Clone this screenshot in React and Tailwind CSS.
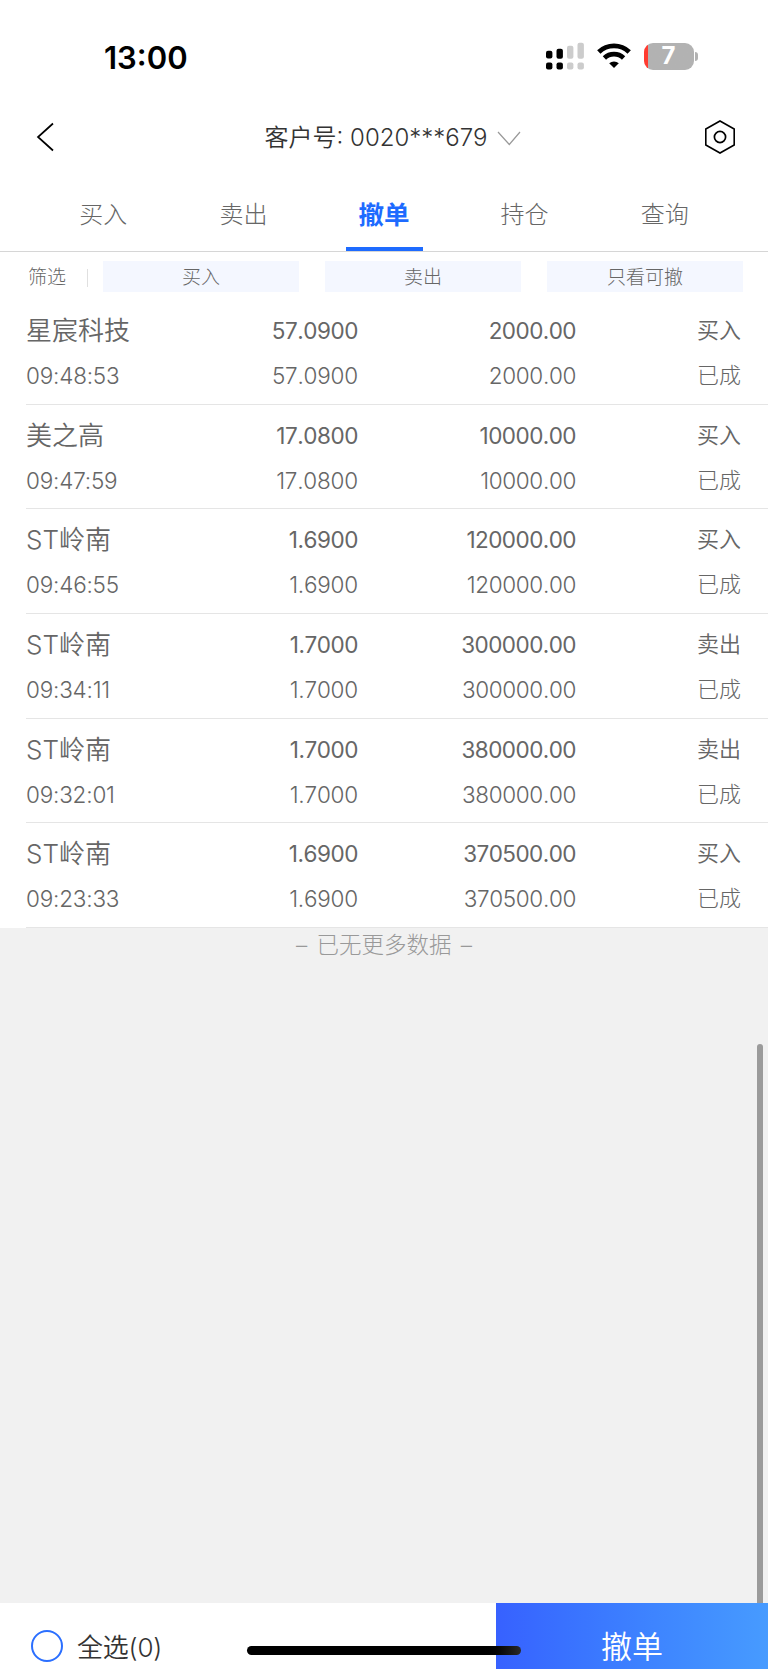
import React from 'react';

const tabs = ['买入', '卖出', '撤单', '持仓', '查询'];

const filters = ['买入', '卖出', '只看可撤'];

const orders = [
  { name: '星宸科技', time: '09:48:53', price: '57.0900', amount: '2000.00', side: '买入', status: '已成' },
  { name: '美之高', time: '09:47:59', price: '17.0800', amount: '10000.00', side: '买入', status: '已成' },
  { name: 'ST岭南', time: '09:46:55', price: '1.6900', amount: '120000.00', side: '买入', status: '已成' },
  { name: 'ST岭南', time: '09:34:11', price: '1.7000', amount: '300000.00', side: '卖出', status: '已成' },
  { name: 'ST岭南', time: '09:32:01', price: '1.7000', amount: '380000.00', side: '卖出', status: '已成' },
  { name: 'ST岭南', time: '09:23:33', price: '1.6900', amount: '370500.00', side: '买入', status: '已成' },
];

const SignalIcon = () => (
  <svg width="40" height="28" viewBox="0 0 40 28">
    <g fill="#000">
      <rect x="1" y="8.8" width="6.4" height="7.8" rx="2" />
      <rect x="11.5" y="6.8" width="6.4" height="10" rx="2" />
      <rect x="1" y="20.4" width="6.4" height="7" rx="2" />
      <rect x="11.5" y="20.4" width="6.4" height="7" rx="2" />
    </g>
    <g fill="#cccccc">
      <rect x="22" y="3.8" width="6.4" height="13" rx="2" />
      <rect x="32.5" y="0.8" width="6.4" height="16" rx="2" />
      <rect x="22" y="20.4" width="6.4" height="7" rx="2" />
      <rect x="32.5" y="20.4" width="6.4" height="7" rx="2" />
    </g>
  </svg>
);

const WifiIcon = () => (
  <svg width="34" height="26" viewBox="0 0 34 26">
    <path d="M1.8 9 A22 22 0 0 1 32.2 9" fill="none" stroke="#000" strokeWidth="4.8" />
    <path d="M7.4 14.9 A14 14 0 0 1 26.6 14.9" fill="none" stroke="#000" strokeWidth="4.8" />
    <path d="M12.2 20.2 A7.4 7.4 0 0 1 21.8 20.2 L17 25 Z" fill="#000" />
  </svg>
);

const StatusBar = () => (
  <div className="flex h-[104px] items-start justify-between pl-[104px] pr-[70px]">
    <div className="pt-[38.5px] text-[31px] font-semibold leading-[38px] text-black">13:00</div>
    <div className="flex items-center pt-[42px]">
      <SignalIcon />
      <div className="ml-[12px]">
        <WifiIcon />
      </div>
      <div className="ml-[13px] flex h-[27px] w-[50px] items-center justify-center rounded-[9px] bg-linear-to-r from-[#ff3b30] from-[4px] to-[#b2b2b2] to-[4px] text-[24px] font-bold leading-none text-white">
        7
      </div>
      <div className="ml-[1.5px] h-[9px] w-[3px] rounded-r-full bg-[#b2b2b2]" />
    </div>
  </div>
);

const Header = () => (
  <div className="grid h-[66px] grid-cols-[1fr_auto_1fr] items-center pl-[36px] pr-[32px]">
    <svg width="19" height="30" viewBox="0 0 19 30">
      <path d="M17 1.5 L2 15 L17 28.5" fill="none" stroke="#000" strokeWidth="1.7" />
    </svg>
    <div className="ml-[14px] flex items-center pt-[2px] text-[24px] font-[350] leading-[36px] text-[#333333]">
      <span>客户号: 0020***679</span>
      <svg className="ml-[10px]" width="24" height="15" viewBox="0 0 24 15">
        <path d="M1 1 L12.3 13.5 L23 1" fill="none" stroke="#999" strokeWidth="1.2" />
      </svg>
    </div>
    <svg className="justify-self-end" width="32" height="36" viewBox="0 0 32 36">
      <path d="M16 2 L30.2 10 V26 L16 34 L1.8 26 V10 Z" fill="none" stroke="#000" strokeWidth="1.6" />
      <circle cx="16" cy="18" r="5.6" fill="none" stroke="#000" strokeWidth="1.7" />
    </svg>
  </div>
);

const Tabs = () => (
  <div className="flex h-[82px] justify-center border-b border-[#d6d6d6] px-[33px]">
    {tabs.map((tab) => (
      <div key={tab} className="flex flex-1 flex-col items-center justify-between">
        {tab === '撤单' ? (
          <>
            <span className="pt-[27px] text-[25.5px] font-bold leading-[36px] text-[#1e6bff]">{tab}</span>
            <span className="h-[4px] w-[77px] bg-[#1e6bff]" />
          </>
        ) : (
          <span className="pt-[27px] text-[24px] font-light leading-[36px] text-[#666666]">{tab}</span>
        )}
      </div>
    ))}
  </div>
);

const FilterBar = () => (
  <div className="flex h-[48px] items-start pl-[28px] pr-[25px] pt-[9px] text-[19px] font-light text-[#666666]">
    <span className="w-[59px] leading-[33px]">筛选</span>
    <span className="mr-[15px] mt-[8px] h-[18px] w-px bg-[#e0e0e0]" />
    <div className="grid flex-1 grid-cols-3 gap-[26px]">
      {filters.map((item) => (
        <button key={item} className="h-[31px] bg-[#f4f7ff] leading-[33px]">{item}</button>
      ))}
    </div>
  </div>
);

const OrderRow = ({ order }) => (
  <div className="ml-[26px] grid h-[104.67px] grid-cols-[120px_212px_218px_165px] grid-rows-[45px_45px] border-b border-[#e5e5e5] pt-[8px] text-[22.5px] leading-[45px] text-[#666666]">
    <span className="whitespace-nowrap text-[26px] font-[350]">{order.name}</span>
    <span className="text-right tracking-[-0.45px] [font-kerning:none]">{order.price}</span>
    <span className="text-right tracking-[-0.55px] [font-kerning:none]">{order.amount}</span>
    <span className="text-right text-[22px] font-[350]">{order.side}</span>
    <span className="font-light tracking-[-0.2px]">{order.time}</span>
    <span className="text-right font-light tracking-[-0.2px] [font-kerning:none]">{order.price}</span>
    <span className="text-right font-light tracking-[-0.35px] [font-kerning:none]">{order.amount}</span>
    <span className="text-right text-[22px] font-light">{order.status}</span>
  </div>
);

const BottomBar = () => (
  <div className="relative flex h-[66px] overflow-hidden bg-white">
    <div className="flex flex-1 items-start pl-[31px] pt-[27px]">
      <span className="h-[32px] w-[32px] rounded-full border-2 border-[#2b6fff]" />
      <span className="ml-[14px] pt-px text-[26px] font-[350] leading-[34px] tracking-[-0.2px] text-[#333333]">全选(0)</span>
    </div>
    <button className="h-full w-[272px] bg-linear-to-r from-[#3761ff] to-[#479bff] pt-[22px] text-[31px] font-[350] leading-[42px] text-white">
      撤单
    </button>
    {/* Home indicator */}
    <div className="absolute left-[247px] top-[43px] h-[9px] w-[274px] rounded-full bg-linear-to-r from-black from-85% to-[#2a2a2a]" />
  </div>
);

const App = () => {
  return (
    <div className="relative flex h-[1669px] w-[768px] flex-col overflow-hidden bg-[#f1f1f1] font-['Inter','Noto_Sans_CJK_SC',sans-serif]">
      <div className="bg-white">
        <StatusBar />
        <Header />
        <Tabs />
        <FilterBar />
        {orders.map((order) => (
          <OrderRow key={order.time} order={order} />
        ))}
      </div>
      <div className="flex-1 text-center text-[22.5px] font-light leading-[34px] text-[#999999] [word-spacing:3px]">– 已无更多数据 –</div>
      {/* Scroll thumb of the order list */}
      <div className="absolute right-[5px] top-[1044px] h-[580px] w-[6px] rounded-full bg-[#9b9b9b]" />
      <BottomBar />
    </div>
  );
};

export default App;
